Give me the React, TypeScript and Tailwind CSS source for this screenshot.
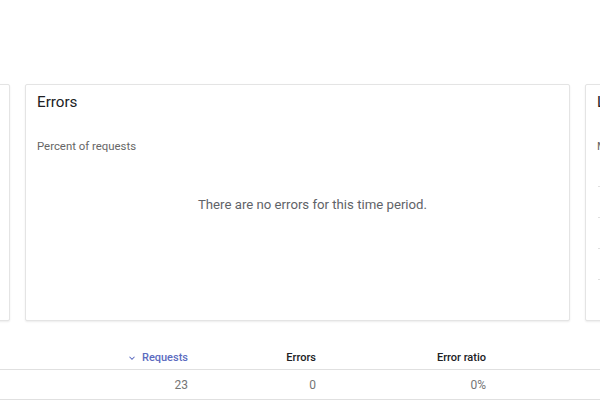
import React from "react";

function Card({ children, className = "" }: { children?: React.ReactNode; className?: string }) {
  return (
    <div
      className={`flex h-[237px] w-[545px] shrink-0 flex-col rounded-[2px] border border-[#e4e4e4] bg-white shadow-[0_1px_2px_rgba(0,0,0,0.08)] ${className}`}
    >
      {children}
    </div>
  );
}

function ChevronDown() {
  return (
    <svg width="10" height="10" viewBox="0 0 24 24" fill="none" stroke="#5c6bc0" strokeWidth="2.5">
      <path d="M6 9l6 6 6-6" />
    </svg>
  );
}

export default function App() {
  return (
    <div className="h-[400px] w-[600px] overflow-hidden bg-white font-['Roboto',sans-serif]">
      <div className="flex gap-[15px] pt-[84px] ml-[-535px]">
        <Card />
        <Card>
          <div className="pl-[11px] pt-[5px] text-[15.2px] leading-6 text-[#202124]">Errors</div>
          <div className="pl-[11px] pt-[24px] text-[11.4px] leading-4 text-[#666]">Percent of requests</div>
          <div className="flex flex-1 items-start justify-center pl-[30px] pt-[41px] text-[13.2px] text-[#5f6368]">
            There are no errors for this time period.
          </div>
        </Card>
        <Card>
          <div className="pl-[11px] pt-[5px] text-[15.2px] leading-6 text-[#202124]">Latency</div>
          <div className="pl-[11px] pt-[24px] text-[11.4px] leading-4 text-[#666]">Milliseconds</div>
          <div className="flex flex-col gap-[30px] px-3 pt-[32px]">
            <div className="h-px bg-[#e0e0e0]" />
            <div className="h-px bg-[#e0e0e0]" />
            <div className="h-px bg-[#e0e0e0]" />
            <div className="h-px bg-[#e0e0e0]" />
          </div>
        </Card>
      </div>

      <div className="mt-[28px]">
        <div className="flex h-[21px] items-start border-b border-[#e0e0e0] pt-[1px] text-[11px] font-medium leading-4">
          <div className="flex w-[188px] items-center justify-end gap-[5px] text-[#5c6bc0]">
            <ChevronDown />
            Requests
          </div>
          <div className="w-[128px] text-right text-[#202124]">Errors</div>
          <div className="w-[170px] text-right text-[#202124]">Error ratio</div>
        </div>
        <div className="flex h-[30px] items-center border-b border-[#e0e0e0] text-[12px] text-[#757575]">
          <div className="w-[188px] text-right">23</div>
          <div className="w-[128px] text-right">0</div>
          <div className="w-[170px] text-right">0%</div>
        </div>
      </div>
    </div>
  );
}
